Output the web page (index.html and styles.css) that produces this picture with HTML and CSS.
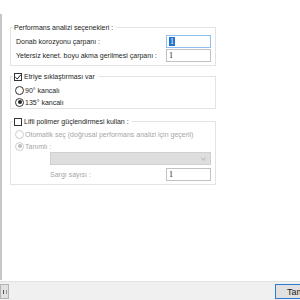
FILE: index.html
```html
<!DOCTYPE html>
<html lang="tr">
<head>
  <meta charset="UTF-8">
  <title>Performans analizi</title>
  <link rel="stylesheet" href="styles.css">
</head>
<body>
  <div class="window">
    <div class="panel">
      <div class="content">

        <fieldset class="group group-first">
          <legend>Performans analizi seçenekleri :</legend>
          <div class="row">
            <span>Donab korozyonu çarpanı :</span>
            <span class="field focused"><span class="sel">1</span></span>
          </div>
          <div class="row">
            <span>Yetersiz kenet. boyu akma gerilmesi çarpanı :</span>
            <span class="field">1</span>
          </div>
        </fieldset>

        <fieldset class="group group-second">
          <legend><span class="check checked"><svg viewBox="0 0 8 8"><path d="M1.3 4.2 L3.2 6 L6.8 1.8" fill="none" stroke="#222" stroke-width="1"/></svg></span>Etriye sıklaştırması var</legend>
          <div class="option"><span class="radio"></span>90° kancalı</div>
          <div class="option"><span class="radio on"></span>135° kancalı</div>
        </fieldset>

        <fieldset class="group group-third">
          <legend><span class="check"></span>Lifli polimer güçlendirmesi kullan :</legend>
          <div class="option disabled"><span class="radio"></span>Otomatik seç (doğrusal performans analizi için geçerli)</div>
          <div class="option disabled"><span class="radio on"></span>Tanımlı :</div>
          <div class="combo"><svg viewBox="0 0 6 4"><path d="M0.5 0.8 L3 3.2 L5.5 0.8" fill="none" stroke="#8a8a8a" stroke-width="0.8"/></svg></div>
          <div class="row sub">
            <span class="muted">Sargı sayısı :</span>
            <span class="field">1</span>
          </div>
        </fieldset>

      </div>
    </div>
    <div class="footer">
      <button class="mini"><span class="mini-icon"></span></button>
      <button class="ok">Tamam</button>
    </div>
  </div>
</body>
</html>
```

FILE: styles.css
```css
body {
  margin: 0;
  background-color: #ffffff;
  font-family: "Liberation Sans", Arial, sans-serif;
  font-size: 7px;
  color: #1e1e1e;
}

.window {
  width: 300px;
  height: 300px;
  display: flex;
  flex-direction: column;
  overflow: hidden;
}

.panel {
  height: 281px;
  padding-top: 14px;
  box-sizing: border-box;
}

.content {
  height: 266px;
  border-left: 2px solid #c6c6c6;
  padding-left: 8px;
  padding-top: 7px;
  box-sizing: border-box;
}

/* cadres */
.group {
  width: 206px;
  box-sizing: border-box;
  margin: 0;
  border: 1px solid #e3e3e3;
  padding: 0 4px 0 4px;
  min-width: 0;
}

.group legend {
  padding: 0 3px 0 1px;
  margin-left: -2px;
  line-height: 13px;
  display: flex;
  align-items: center;
}

.group-first {
  height: 45px;
  padding-top: 1px;
}

.group-second {
  margin-top: 4px;
  height: 39px;
  padding-top: 1px;
}

.group-third {
  margin-top: 6px;
  height: 70px;
  padding-top: 0;
}

.row {
  display: flex;
  justify-content: space-between;
  align-items: center;
  height: 13px;
  margin-bottom: 1px;
  padding-left: 1px;
}

.field {
  width: 45px;
  height: 13px;
  box-sizing: border-box;
  border: 1px solid #c2c2c2;
  background: #ffffff;
  padding-left: 2px;
  line-height: 11px;
  font-family: "Liberation Serif", serif;
  font-size: 8px;
  color: #222;
}

.field.focused {
  border-color: #8cbfee;
}

.sel {
  background: #1f73d1;
  color: #ffffff;
  padding: 0 1px;
}

.option {
  display: flex;
  align-items: center;
  height: 12px;
  gap: 1px;
}

.option.disabled {
  color: #a6a6a6;
}

/* cases */
.check {
  width: 8px;
  height: 8px;
  box-sizing: border-box;
  border: 1px solid #333;
  background: #fff;
  margin-right: 2px;
  display: inline-flex;
}

.check svg {
  width: 8px;
  height: 8px;
  margin: -1px;
}

.radio {
  width: 9px;
  height: 9px;
  box-sizing: border-box;
  border: 1px solid #333;
  border-radius: 50%;
  background: #fff;
  position: relative;
  flex-shrink: 0;
}

.radio.on::after {
  content: "";
  position: absolute;
  left: 1.5px;
  top: 1.5px;
  width: 4px;
  height: 4px;
  border-radius: 50%;
  background: #222;
}

.disabled .radio {
  border-color: #cccccc;
}

.disabled .radio.on::after {
  background: #bdbdbd;
}

.combo {
  margin: 0 0 3px 35px;
  height: 11px;
  border: 1px solid #d0d0d0;
  background: #dedede;
  display: flex;
  justify-content: flex-end;
  align-items: center;
  padding-right: 4px;
}

.combo svg {
  width: 5px;
  height: 4px;
}

.row.sub {
  padding-left: 35px;
}

.muted {
  color: #a6a6a6;
}

/* barre du bas */
.footer {
  flex: 1;
  background: #f0f0f0;
  border-top: 1px solid #e2e2e2;
  display: flex;
  justify-content: space-between;
  align-items: flex-start;
  padding-top: 2px;
}

.footer button {
  height: 15px;
  box-sizing: border-box;
  font-family: "Liberation Sans", Arial, sans-serif;
  font-size: 9px;
  background: #e1e1e1;
  padding: 0;
  flex-shrink: 0;
}

.footer .mini {
  width: 9px;
  border: 1px solid #b4b4b4;
  display: flex;
  align-items: center;
  justify-content: center;
}

.mini-icon {
  width: 2px;
  height: 4px;
  border-left: 1px solid #555;
  border-right: 1px solid #999;
}

.footer .ok {
  width: 60px;
  margin-right: -35px;
  border: 1px solid #2b7bd4;
  text-align: left;
  padding-left: 11px;
  color: #222;
}
```
